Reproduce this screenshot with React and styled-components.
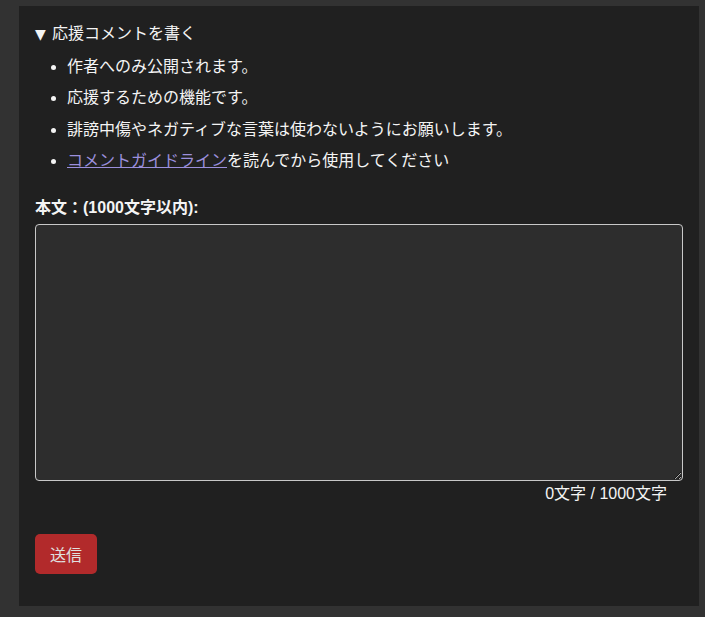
import React, { useState } from "react";
import styled, { createGlobalStyle } from "styled-components";

const GlobalStyle = createGlobalStyle`
  html, body {
    margin: 0;
    padding: 0;
    background: #323232;
  }
  body {
    font-family: "Liberation Sans", Arial, "Noto Sans CJK JP", sans-serif;
    color: #f4f4f4;
  }
`;

const Page = styled.div`
  padding: 6px 6px 11px 19px;
`;

const Panel = styled.section`
  width: 680px;
  height: 600px;
  box-sizing: border-box;
  background: #202020;
  padding: 16px 16px 0 16px;
`;

const Details = styled.details`
  margin: 0;
`;

const Summary = styled.summary`
  font-size: 16px;
  line-height: 24px;
  cursor: pointer;
  list-style: none;
  display: flex;
  align-items: center;
  gap: 4px;
  &::-webkit-details-marker {
    display: none;
  }
`;

const Arrow = styled.span`
  font-family: "DejaVu Sans", sans-serif;
  font-size: 14px;
  line-height: 24px;
  width: 13px;
`;

const Notes = styled.ul`
  margin: 5px 0 0 0;
  padding-left: 32px;
`;

const Note = styled.li`
  font-size: 16px;
  line-height: 31.4px;
`;

const GuideLink = styled.a`
  color: #9b8fdc;
  text-decoration: underline;
`;

const Form = styled.form`
  margin-top: 19px;
  display: flex;
  flex-direction: column;
`;

const Label = styled.label`
  font-size: 16px;
  font-weight: bold;
  line-height: 24px;
  margin-bottom: 4px;
`;

const TextBox = styled.textarea`
  width: 648px;
  height: 257px;
  box-sizing: border-box;
  background: #2d2d2d;
  color: #f4f4f4;
  border: 1px solid #c8c8c8;
  border-radius: 4px;
  font-family: inherit;
  font-size: 16px;
  padding: 8px;
  margin: 0;
  outline: none;
`;

const Counter = styled.div`
  font-size: 16px;
  line-height: 24px;
  text-align: right;
  padding-right: 16px;
  margin-top: 1px;
`;

const SendButton = styled.button`
  align-self: flex-start;
  margin-top: 28px;
  width: 62px;
  height: 40px;
  border: none;
  border-radius: 5px;
  background: #b22a2b;
  color: #e0e0e0;
  font-family: inherit;
  font-size: 16px;
  cursor: pointer;
`;

export default function App() {
  const [text, setText] = useState("");

  return (
    <>
      <GlobalStyle />
      <Page>
        <Panel>
          <Details open>
            <Summary>
              <Arrow>▼</Arrow>
              応援コメントを書く
            </Summary>
            <Notes>
              <Note>作者へのみ公開されます。</Note>
              <Note>応援するための機能です。</Note>
              <Note>誹謗中傷やネガティブな言葉は使わないようにお願いします。</Note>
              <Note>
                <GuideLink href="#">コメントガイドライン</GuideLink>
                を読んでから使用してください
              </Note>
            </Notes>
          </Details>
          <Form onSubmit={(e) => e.preventDefault()}>
            <Label htmlFor="body">本文：(1000文字以内):</Label>
            <TextBox
              id="body"
              maxLength={1000}
              value={text}
              onChange={(e) => setText(e.target.value)}
            />
            <Counter>{text.length}文字 / 1000文字</Counter>
            <SendButton type="submit">送信</SendButton>
          </Form>
        </Panel>
      </Page>
    </>
  );
}
